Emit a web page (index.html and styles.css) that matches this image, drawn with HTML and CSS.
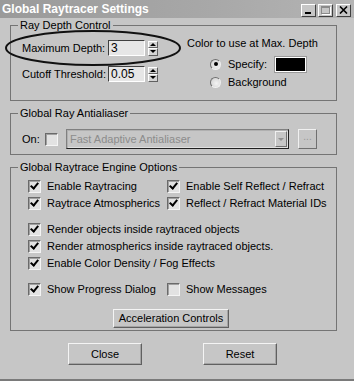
FILE: index.html
```html
<!DOCTYPE html>
<html lang="en">
<head>
    <meta charset="UTF-8">
    <title>Global Raytracer Settings</title>
    <link rel="stylesheet" href="styles.css">
</head>
<body>
    <div class="titlebar">
        <span class="title">Global Raytracer Settings</span>
        <div class="title-buttons">
            <span class="tbtn"><span class="min-glyph"></span></span>
            <span class="tbtn"><span class="max-glyph"></span></span>
            <span class="tbtn close-glyph">
                <svg width="9" height="8" viewBox="0 0 9 8"><path d="M1 0.5 L8 7.5 M8 0.5 L1 7.5" stroke="#000" stroke-width="1.6"/></svg>
            </span>
        </div>
    </div>

    <div class="dialog">
        <!-- Ray depth -->
        <fieldset class="group">
            <legend>Ray Depth Control</legend>
            <div class="depth-body">
                <div class="depth-left">
                    <div class="spin-row">
                        <span class="spin-label">Maximum Depth:</span>
                        <span class="field">3</span>
                        <span class="spinner"><span class="up"></span><span class="down"></span></span>
                    </div>
                    <div class="spin-row">
                        <span class="spin-label">Cutoff Threshold:</span>
                        <span class="field">0.05</span>
                        <span class="spinner"><span class="up"></span><span class="down"></span></span>
                    </div>
                </div>
                <div class="depth-right">
                    <div class="color-head">Color to use at Max. Depth</div>
                    <div class="radio-row">
                        <span class="radio checked"></span>
                        <span class="radio-text">Specify:</span>
                        <span class="swatch"></span>
                    </div>
                    <div class="radio-row">
                        <span class="radio"></span>
                        <span class="radio-text">Background</span>
                    </div>
                </div>
            </div>
            <svg class="ellipse" width="178" height="38" viewBox="0 0 178 38">
                <ellipse cx="89" cy="19" rx="87" ry="17" fill="none" stroke="#111" stroke-width="2"/>
            </svg>
        </fieldset>

        <!-- Antialiaser -->
        <fieldset class="group">
            <legend>Global Ray Antialiaser</legend>
            <div class="aa-body">
                <span class="on-label">On:</span>
                <span class="check"></span>
                <div class="dropdown">
                    <span class="dropdown-text">Fast Adaptive Antialiaser</span>
                    <span class="dropdown-arrow"></span>
                </div>
                <span class="dots-btn">...</span>
            </div>
        </fieldset>

        <!-- Engine options -->
        <fieldset class="group">
            <legend>Global Raytrace Engine Options</legend>
            <div class="engine-body">
                <div class="opt-row">
                    <label class="opt col-left"><span class="check on"></span>Enable Raytracing</label>
                    <label class="opt"><span class="check on"></span>Enable Self Reflect / Refract</label>
                </div>
                <div class="opt-row">
                    <label class="opt col-left"><span class="check on"></span>Raytrace Atmospherics</label>
                    <label class="opt"><span class="check on"></span>Reflect / Refract Material IDs</label>
                </div>
                <div class="opt-row spaced">
                    <label class="opt"><span class="check on"></span>Render objects inside raytraced objects</label>
                </div>
                <div class="opt-row">
                    <label class="opt"><span class="check on"></span>Render atmospherics inside raytraced objects.</label>
                </div>
                <div class="opt-row">
                    <label class="opt"><span class="check on"></span>Enable Color Density / Fog Effects</label>
                </div>
                <div class="opt-row spaced">
                    <label class="opt col-left"><span class="check on"></span>Show Progress Dialog</label>
                    <label class="opt"><span class="check"></span>Show Messages</label>
                </div>
                <div class="accel-wrap">
                    <span class="button accel">Acceleration Controls</span>
                </div>
            </div>
        </fieldset>

        <div class="footer">
            <span class="button footer-btn">Close</span>
            <span class="button footer-btn">Reset</span>
        </div>
    </div>
</body>
</html>
```

FILE: styles.css
```css
* {
    margin: 0;
    padding: 0;
    box-sizing: border-box;
}

body {
    width: 354px;
    height: 381px;
    background: #c6c6c6;
    font-family: 'Liberation Sans', Arial, sans-serif;
    font-size: 11px;
    line-height: 13px;
    color: #000;
    overflow: hidden;
    border-bottom: 2px solid #7a7a7a;
}

/* title bar */
.titlebar {
    height: 18px;
    display: flex;
    align-items: center;
    justify-content: space-between;
    padding: 0 3px 0 2px;
    background: linear-gradient(to right, #9a9a9a 0%, #a8a8a8 60%, #b4b4b4 100%);
}

.title {
    color: #fff;
    font-weight: bold;
    font-size: 12px;
}

.title-buttons {
    display: flex;
    gap: 2px;
    margin-top: 2px;
}

.tbtn {
    width: 15px;
    height: 13px;
    background: #c6c6c6;
    border: 1px solid;
    border-color: #fff #404040 #404040 #fff;
    display: flex;
    align-items: center;
    justify-content: center;
}

.tbtn:last-child {
    margin-left: 1px;
}

.min-glyph {
    width: 6px;
    height: 2px;
    background: #000;
    margin-top: 6px;
    margin-left: -2px;
}

.max-glyph {
    width: 9px;
    height: 8px;
    border: 1px solid #8a8a8a;
    border-top-width: 2px;
    box-shadow: 1px 1px 0 #fff;
}

/* dialog */
.dialog {
    padding: 1px 17px 0 10px;
}

.group {
    position: relative;
    border: 1px solid #747474;
    margin-bottom: 6px;
}

.group legend {
    margin-left: 7px;
    padding: 0 2px;
}

/* ray depth */
.depth-body {
    display: flex;
    padding: 0 0 8px 11px;
}

.depth-left {
    width: 165px;
    padding-top: 8px;
}

.spin-row {
    display: flex;
    align-items: center;
    height: 16px;
    margin-bottom: 10px;
}

.spin-label {
    width: 86px;
}

.field {
    width: 37px;
    height: 16px;
    background: #e6e6e6;
    border: 1px solid;
    border-color: #404040 #fff #fff #404040;
    padding: 1px 2px;
    font-size: 12px;
    line-height: 12px;
}

.spinner {
    width: 10px;
    height: 15px;
    margin-left: 3px;
    display: flex;
    flex-direction: column;
}

.spinner span {
    flex: 1;
    background: #d4d4d4;
    border: 1px solid;
    border-color: #fff #606060 #606060 #fff;
    position: relative;
}

.spinner .up::after,
.spinner .down::after {
    content: "";
    position: absolute;
    left: 1px;
    border-left: 3px solid transparent;
    border-right: 3px solid transparent;
}

.spinner .up::after {
    top: 1px;
    border-bottom: 3px solid #000;
}

.spinner .down::after {
    top: 1px;
    border-top: 3px solid #000;
}

.depth-right {
    padding-top: 5px;
}

.color-head {
    height: 13px;
    margin-bottom: 5px;
}

.radio-row {
    display: flex;
    align-items: center;
    height: 18px;
    padding-left: 23px;
}

.radio {
    width: 11px;
    height: 11px;
    border-radius: 50%;
    background: radial-gradient(circle at 60% 60%, #f4f4f4 0%, #dcdcdc 60%);
    border: 1px solid;
    border-color: #707070 #f0f0f0 #f0f0f0 #707070;
    position: relative;
}

.radio.checked::after {
    content: "";
    position: absolute;
    left: 2.5px;
    top: 2.5px;
    width: 4px;
    height: 4px;
    border-radius: 50%;
    background: #000;
}

.radio-text {
    margin-left: 7px;
}

.swatch {
    width: 31px;
    height: 15px;
    margin-left: 8px;
    background: #000;
    border: 1px solid #fff;
    outline: 1px solid #9a9a9a;
}

.ellipse {
    position: absolute;
    left: -7px;
    top: -3px;
}

/* antialiaser */
.aa-body {
    display: flex;
    align-items: center;
    padding: 9px 0 5px 11px;
}

.on-label {
    width: 23px;
}

.check {
    width: 13px;
    height: 13px;
    background: #e2e2e2;
    border: 1px solid;
    border-color: #6a6a6a #f4f4f4 #f4f4f4 #6a6a6a;
    box-shadow: inset 1px 1px 0 #a0a0a0;
    position: relative;
    flex-shrink: 0;
}

.check.on::after {
    content: "";
    position: absolute;
    left: 3px;
    top: 0px;
    width: 3px;
    height: 6px;
    border: solid #000;
    border-width: 0 2px 2px 0;
    transform: rotate(40deg);
}

.dropdown {
    width: 223px;
    height: 20px;
    margin-left: 8px;
    display: flex;
    align-items: center;
    justify-content: space-between;
    background: #c6c6c6;
    border: 1px solid;
    border-color: #808080 #202020 #202020 #808080;
    box-shadow: inset 1px 1px 0 #b0b0b0, inset -1px -1px 0 #e0e0e0;
    padding: 0 1px 0 3px;
}

.dropdown-text {
    color: #8c8c8c;
}

.dropdown-arrow {
    width: 12px;
    height: 16px;
    border: 1px solid;
    border-color: #f0f0f0 #707070 #707070 #f0f0f0;
    position: relative;
}

.dropdown-arrow::after {
    content: "";
    position: absolute;
    left: 2px;
    top: 6px;
    border-left: 3px solid transparent;
    border-right: 3px solid transparent;
    border-top: 3px solid #909090;
}

.dots-btn {
    width: 19px;
    height: 20px;
    margin-left: 9px;
    border: 1px solid;
    border-color: #f0f0f0 #707070 #707070 #f0f0f0;
    color: #999;
    text-align: center;
    line-height: 14px;
    font-size: 10px;
}

/* engine options */
.engine-body {
    padding: 4px 0 2px 17px;
}

.opt-row {
    display: flex;
    height: 17px;
    align-items: center;
}

.opt-row.spaced {
    margin-top: 9px;
}

.opt {
    display: flex;
    align-items: center;
    white-space: nowrap;
}

.opt .check {
    margin-right: 6px;
}

.col-left {
    width: 139px;
}

.accel-wrap {
    display: flex;
    justify-content: center;
    margin-top: 11px;
    padding-right: 22px;
}

/* buttons */
.button {
    display: flex;
    align-items: center;
    justify-content: center;
    background: #c6c6c6;
    border: 1px solid;
    border-color: #f4f4f4 #606060 #606060 #f4f4f4;
    box-shadow: inset -1px -1px 0 #a4a4a4;
    font-size: 11px;
    white-space: nowrap;
}

.accel {
    width: 116px;
    height: 19px;
}

.footer {
    display: flex;
    gap: 61px;
    padding-left: 58px;
    margin-top: 12px;
}

.footer-btn {
    width: 74px;
    height: 22px;
}
```
